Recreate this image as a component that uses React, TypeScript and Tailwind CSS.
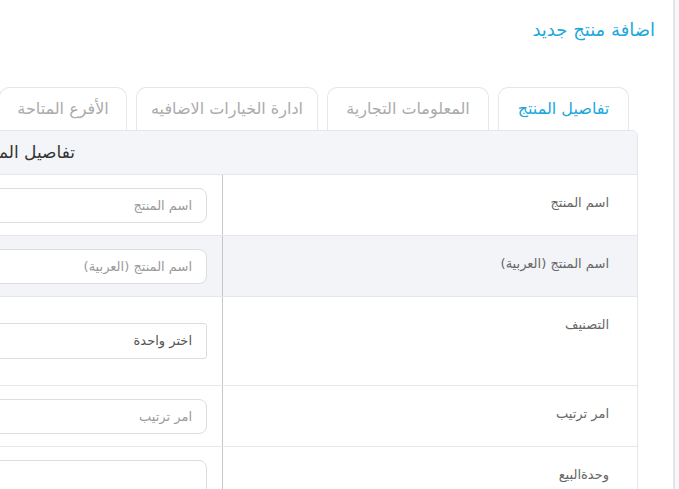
import React from 'react';

const tabs = [
    { label: 'تفاصيل المنتج', width: 'w-[131px]', active: true },
    { label: 'المعلومات التجارية', width: 'w-[162px]', active: false },
    { label: 'ادارة الخيارات الاضافيه', width: 'w-[182px]', active: false },
    { label: 'الأفرع المتاحة', width: 'w-[128px]', active: false },
];

const TextInput = ({ placeholder }: { placeholder: string }) => (
    <input
        type="text"
        placeholder={placeholder}
        className="h-[35px] w-[420px] rounded-lg border border-[#dcdde0] bg-white px-[14px] text-[13px] text-[#555] placeholder:text-[#9a9a9a] outline-none"
    />
);

const Row = ({
    label,
    shaded,
    tall,
    children,
}: {
    label: string;
    shaded?: boolean;
    tall?: boolean;
    children: React.ReactNode;
}) => (
    <div className={`flex border-b border-[#e6e7eb] ${shaded ? 'bg-[#f3f4f8]' : 'bg-white'}`}>
        <div
            className={`w-[415px] shrink-0 border-l border-[#c6c6c8] pr-[28px] text-[13px] text-[#666] ${
                tall ? 'h-[88px]' : 'h-[60px]'
            } pt-[18px]`}
        >
            {label}
        </div>
        <div className="flex flex-1 items-center pr-[15px]">{children}</div>
    </div>
);

export default function App() {
    return (
        <div
            dir="rtl"
            className="flex h-[489px] w-full overflow-hidden bg-white"
            style={{ fontFamily: '"DejaVu Sans", sans-serif' }}
        >
            <div className="w-[6px] shrink-0 border-l-2 border-[#e4e5ea] bg-[#f7f7fa]" />

            <div className="min-w-0 flex-1 overflow-hidden">
                <h1 className="pr-[18px] pt-[16px] text-[18px] font-normal text-[#1ba8dc]">اضافة منتج جديد</h1>

                <ul className="mt-[44px] flex gap-[9px] pr-[44px]">
                    {tabs.map((tab) => (
                        <li
                            key={tab.label}
                            className={`flex h-[43px] shrink-0 items-center justify-center rounded-t-[10px] border border-b-0 border-[#e6e6e9] text-[16px] ${
                                tab.width
                            } ${tab.active ? 'relative z-10 -mb-px bg-white text-[#1ba8dc]' : 'text-[#ababab]'}`}
                        >
                            {tab.label}
                        </li>
                    ))}
                </ul>

                <div className="mr-[35px] w-[1100px] rounded-tr-[5px] border border-[#e6e6e9]">
                    <div className="flex h-[44px] items-center border-b border-[#e6e7eb] bg-[#f4f5f9] pr-[562px] text-[17px] text-[#333]">
                        تفاصيل المنتج
                    </div>
                    <Row label="اسم المنتج">
                        <TextInput placeholder="اسم المنتج" />
                    </Row>
                    <Row label="اسم المنتج (العربية)" shaded>
                        <TextInput placeholder="اسم المنتج (العربية)" />
                    </Row>
                    <Row label="التصنيف" tall>
                        <div className="flex h-[36px] w-[420px] items-center rounded-[3px] border border-[#dcdde0] bg-white px-[14px] text-[13px] text-[#555]">
                            اختر واحدة
                        </div>
                    </Row>
                    <Row label="امر ترتيب">
                        <TextInput placeholder="امر ترتيب" />
                    </Row>
                    <Row label="وحدةالبيع">
                        <TextInput placeholder="" />
                    </Row>
                </div>
            </div>
        </div>
    );
}
